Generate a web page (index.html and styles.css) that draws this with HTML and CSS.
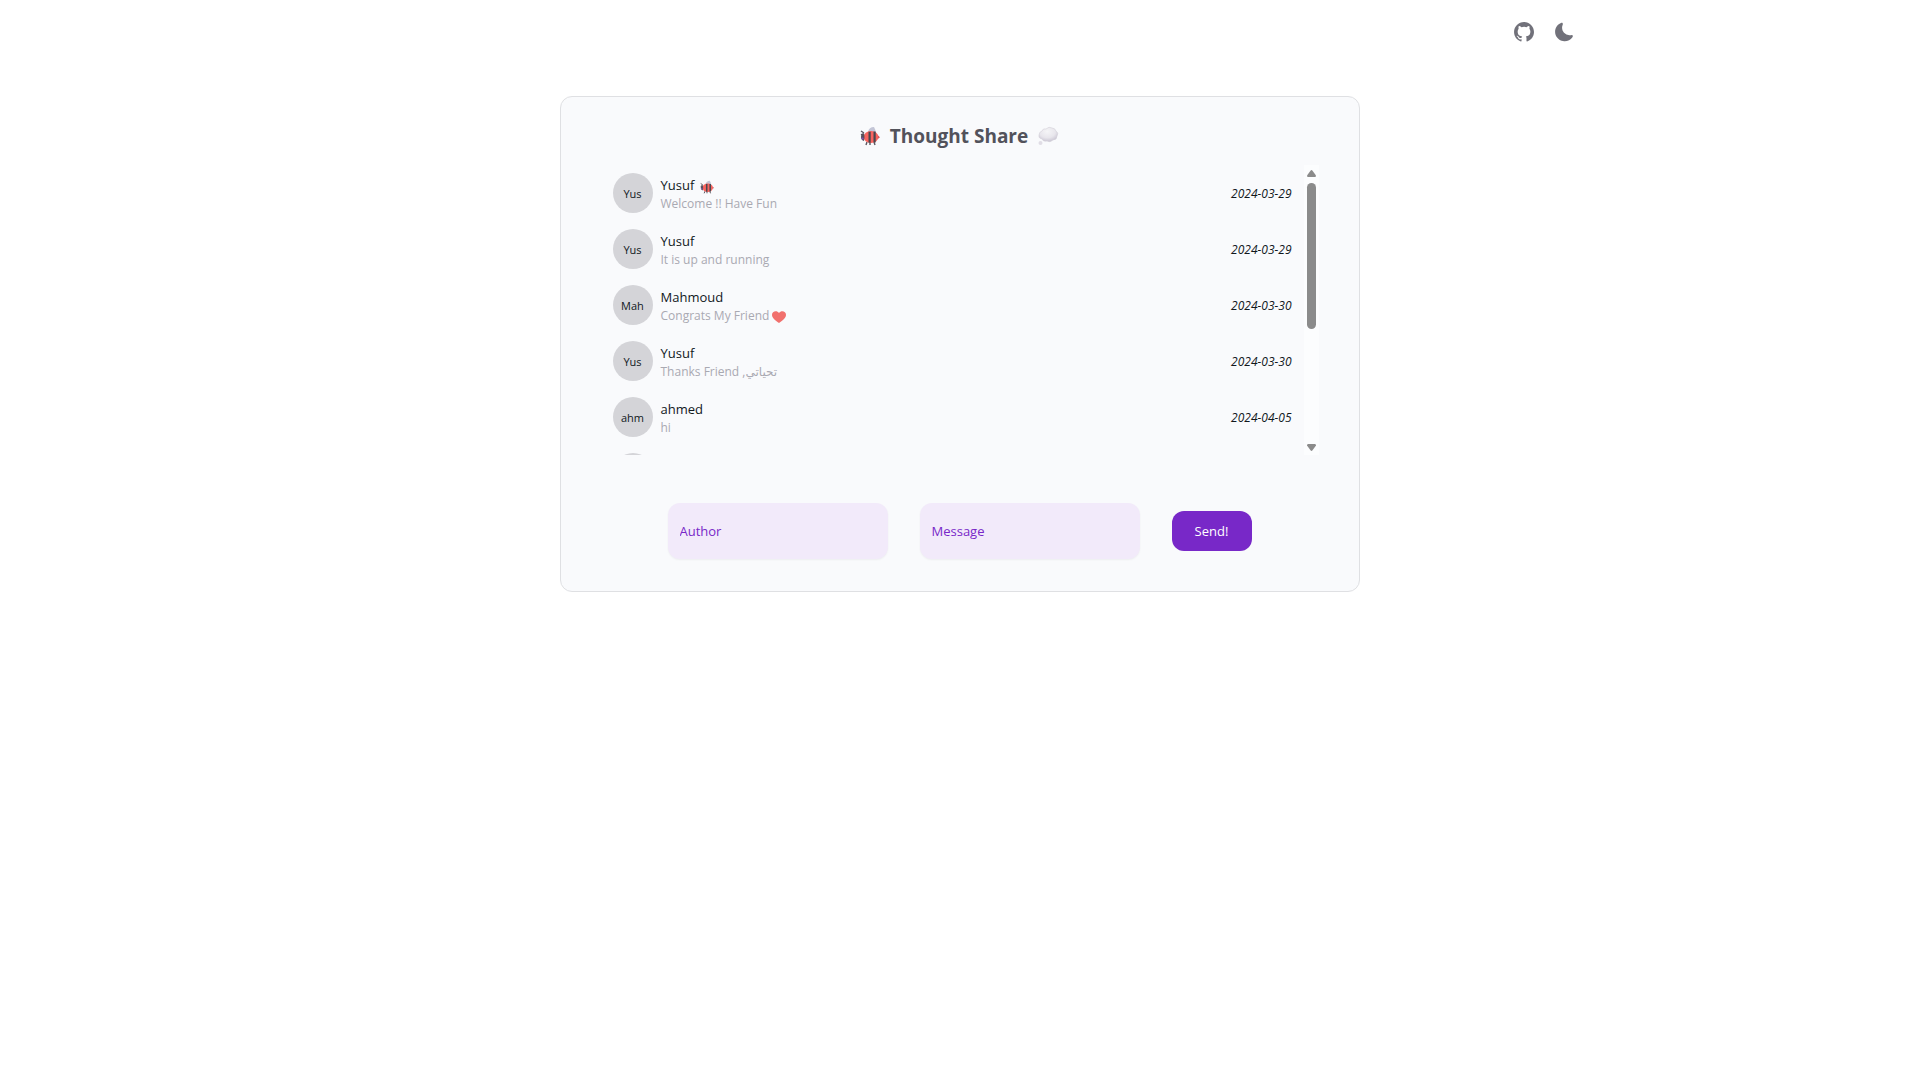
FILE: index.html
```html
<!DOCTYPE html>
<html lang="en">
<head>
<meta charset="UTF-8">
<meta name="viewport" content="width=device-width, initial-scale=1.0">
<title>Thought Share</title>
<link rel="stylesheet" href="styles.css">
</head>
<body>

<!-- shared icons -->
<svg class="sprite" aria-hidden="true">
    <symbol id="bee" viewBox="0 0 20 20">
        <path d="M8 6 Q9 1 14 1 Q16 4 16 8 L10 8Z" fill="#c3c5d6"/>
        <path d="M1 5l3 2M1 9l2-1M7 16l-1 3M10 16v3M14 16l1 3" stroke="#5a5660" stroke-width="1.4"/>
        <ellipse cx="11" cy="11" rx="7.5" ry="6" fill="#f9645f"/>
        <path d="M8.500 5.800h2.200v11H8.500zM13.500 5.600h2.200v10.800h-2.200z" fill="#4a4850"/>
        <path d="M4 7q-3 1-3 4t3 4q1-4 0-8z" fill="#57505c"/>
        <circle cx="2.5" cy="12.500" r="1.1" fill="#8052b5"/>
        <path d="M18 9.500l2 1.700-2 1.500z" fill="#d0575d"/>
    </symbol>
</svg>

<header class="navbar">
    <nav class="nav-links">
        <a href="#" class="icon-btn" aria-label="GitHub">
            <svg width="24" height="24" viewBox="0 0 24 24"><path fill="currentColor" fill-rule="evenodd" clip-rule="evenodd" d="M12.026 2c-5.509 0-9.974 4.465-9.974 9.974 0 4.406 2.857 8.145 6.821 9.465.499.09.679-.217.679-.481 0-.237-.008-.865-.011-1.696-2.775.602-3.361-1.338-3.361-1.338-.452-1.152-1.107-1.459-1.107-1.459-.905-.619.069-.605.069-.605 1.002.07 1.527 1.028 1.527 1.028.89 1.524 2.336 1.084 2.902.829.091-.645.351-1.085.635-1.334-2.214-.251-4.542-1.107-4.542-4.93 0-1.087.389-1.979 1.024-2.675-.101-.253-.446-1.268.099-2.64 0 0 .837-.269 2.742 1.021a9.582 9.582 0 0 1 2.496-.336 9.554 9.554 0 0 1 2.496.336c1.906-1.291 2.742-1.021 2.742-1.021.545 1.372.203 2.387.099 2.64.64.696 1.024 1.587 1.024 2.675 0 3.833-2.33 4.675-4.552 4.922.355.308.675.916.675 1.846 0 1.334-.012 2.41-.012 2.737 0 .267.178.577.687.479C19.146 20.115 22 16.379 22 11.974 22 6.465 17.535 2 12.026 2z"/></svg>
        </a>
        <button type="button" class="icon-btn" aria-label="Switch to dark mode">
            <svg width="22" height="22" viewBox="0 0 24 24"><path fill="currentColor" d="M21.53 15.93c-.16-.27-.61-.69-1.73-.49a8.46 8.46 0 0 1-1.88.13 8.409 8.409 0 0 1-5.91-2.82c-1.3-1.45-2.1-3.34-2.11-5.38 0-1.14.22-2.24.67-3.28.44-1.01.13-1.54-.09-1.76-.23-.23-.77-.55-1.83-.11C4.56 3.94 2.03 8.04 2.33 12.43c.3 4.13 3.2 7.66 7.04 8.99.92.32 1.89.51 2.89.55.16.01.32.02.48.02 3.35 0 6.49-1.58 8.47-4.27.67-.93.49-1.52.32-1.79z"/></svg>
        </button>
    </nav>
</header>

<main class="card">
    <h1 class="title">
        <svg width="20" height="20" role="img" aria-label="bee"><use href="#bee"/></svg>
        Thought Share
        <svg width="21" height="20" viewBox="0 0 21 20" role="img" aria-label="thought">
            <defs>
                <radialGradient id="puff" cx="45%" cy="30%" r="70%">
                    <stop offset="0" stop-color="#f5f5f7"/>
                    <stop offset=".6" stop-color="#e8e6ec"/>
                    <stop offset="1" stop-color="#c9c4d2"/>
                </radialGradient>
            </defs>
            <path fill="url(#puff)" stroke="#d3d0d9" stroke-width=".6" d="M4 5Q5 2 8 3Q11 0 14 2Q17 2 18 5Q21 7 19 10Q19 14 15 14Q12 17 9 15Q5 16 4 13Q0 12 1 9Q1 6 4 5Z"/>
            <circle cx="2.5" cy="17" r="2" fill="#e0dde5"/>
        </svg>
    </h1>

    <div class="thoughts">
        <ul class="thought-list">
            <li class="thought">
                <span class="avatar">Yus</span>
                <div class="text">
                    <span class="name">Yusuf <svg width="14" height="14" role="img" aria-label="bee"><use href="#bee"/></svg></span>
                    <span class="message">Welcome !! Have Fun</span>
                </div>
                <time class="date">2024-03-29</time>
            </li>
            <li class="thought">
                <span class="avatar">Yus</span>
                <div class="text">
                    <span class="name">Yusuf</span>
                    <span class="message">It is up and running</span>
                </div>
                <time class="date">2024-03-29</time>
            </li>
            <li class="thought">
                <span class="avatar">Mah</span>
                <div class="text">
                    <span class="name">Mahmoud</span>
                    <span class="message">Congrats My Friend <svg width="14" height="12" viewBox="0 0 14 12" role="img" aria-label="heart"><path fill="#f1706d" d="M7 12C3 9 0 7 0 3.700C0 0 5-1 7 2C9-1 14 0 14 3.700C14 7 11 9 7 12Z"/></svg></span>
                </div>
                <time class="date">2024-03-30</time>
            </li>
            <li class="thought">
                <span class="avatar">Yus</span>
                <div class="text">
                    <span class="name">Yusuf</span>
                    <span class="message">Thanks Friend ,تحياتي</span>
                </div>
                <time class="date">2024-03-30</time>
            </li>
            <li class="thought">
                <span class="avatar">ahm</span>
                <div class="text">
                    <span class="name">ahmed</span>
                    <span class="message">hi</span>
                </div>
                <time class="date">2024-04-05</time>
            </li>
            <li class="thought">
                <span class="avatar"></span>
            </li>
        </ul>
        <div class="scrollbar" aria-hidden="true">
            <svg width="9" height="7" viewBox="0 0 9 7"><path fill="#8b8b8b" d="M3.500.7Q4.500-.5 5.500.7L9 5.500Q9 7 8 7H1Q0 7 0 5.500Z"/></svg>
            <div class="thumb"></div>
            <svg width="9" height="7" viewBox="0 0 9 7"><path fill="#8b8b8b" d="M3.500 6.300Q4.500 7.500 5.500 6.300L9 1.500Q9 0 8 0H1Q0 0 0 1.500Z"/></svg>
        </div>
    </div>

    <form class="send-form">
        <input type="text" name="author" placeholder="Author" aria-label="Author">
        <input type="text" name="message" placeholder="Message" aria-label="Message">
        <button type="button" class="send-btn">Send!</button>
    </form>
</main>

</body>
</html>
```

FILE: styles.css
```css
* {
    box-sizing: border-box;
}
body {
    margin: 0;
    background: #fff;
    color: #11181c;
    font-family: "Open Sans", "Noto Sans", "DejaVu Sans", sans-serif;
    font-size: 13px;
    line-height: 20px;
}
.sprite {
    position: absolute;
    width: 0;
    height: 0;
}
.navbar {
    display: flex;
    align-items: center;
    justify-content: flex-end;
    max-width: 1280px;
    height: 64px;
    margin: 0 auto;
    padding: 0 25px;
}
.nav-links {
    display: flex;
    align-items: center;
    gap: 17px;
}
.icon-btn {
    display: flex;
    padding: 0;
    border: 0;
    background: none;
    color: #71717a;
    cursor: pointer;
}
.card {
    max-width: 800px;
    margin: 32px auto;
    padding: 25px 40px 32px;
    border: 1px solid #dfe0e3;
    border-radius: 12px;
    background: #f9fafc;
}
.title {
    display: flex;
    align-items: center;
    justify-content: center;
    gap: 10px;
    margin: 0 0 15px;
    color: #52525b;
    font-size: 19px;
    font-weight: 700;
    line-height: 28px;
}
.thoughts {
    display: flex;
    height: 290px;
}
.thought-list {
    flex: 1;
    margin: 0;
    padding: 0;
    overflow: hidden;
    list-style: none;
}
.thought {
    display: flex;
    align-items: center;
    gap: 8px;
    padding: 8px 12px;
}
.avatar {
    display: flex;
    align-items: center;
    justify-content: center;
    width: 40px;
    height: 40px;
    padding-top: 2px;
    border-radius: 50%;
    background: #d4d4d8;
    font-size: 11px;
}
.text {
    display: flex;
    flex: 1;
    flex-direction: column;
    padding-top: 2px;
}
.name svg {
    margin-left: 2px;
    vertical-align: text-bottom;
}
.message {
    color: #a9a9b2;
    font-size: 12px;
    line-height: 18px;
}
.message svg {
    vertical-align: middle;
}
.date {
    padding-top: 2px;
    font-size: 12px;
    font-style: italic;
}
.scrollbar {
    display: flex;
    flex-direction: column;
    align-items: center;
    width: 15px;
    padding: 5px 0 4px;
    background: #fcfdfe;
}
.thumb {
    width: 9px;
    height: 146px;
    margin: 6px 0 auto;
    border-radius: 5px;
    background: #8b8b8b;
}
.send-form {
    display: flex;
    align-items: center;
    justify-content: center;
    gap: 32px;
    margin-top: 48px;
}
.send-form input {
    width: 220px;
    height: 56px;
    padding: 0 12px;
    border: 0;
    border-radius: 12px;
    background: #f2eafa;
    box-shadow: 0 1px 2px rgba(0, 0, 0, 0.05);
    font: inherit;
}
.send-form input::placeholder {
    color: #7828c8;
    opacity: 1;
}
.send-btn {
    width: 80px;
    height: 40px;
    padding: 0;
    border: 0;
    border-radius: 12px;
    background: #7828c8;
    color: #fff;
    font: inherit;
    font-weight: 500;
    cursor: pointer;
}
```
